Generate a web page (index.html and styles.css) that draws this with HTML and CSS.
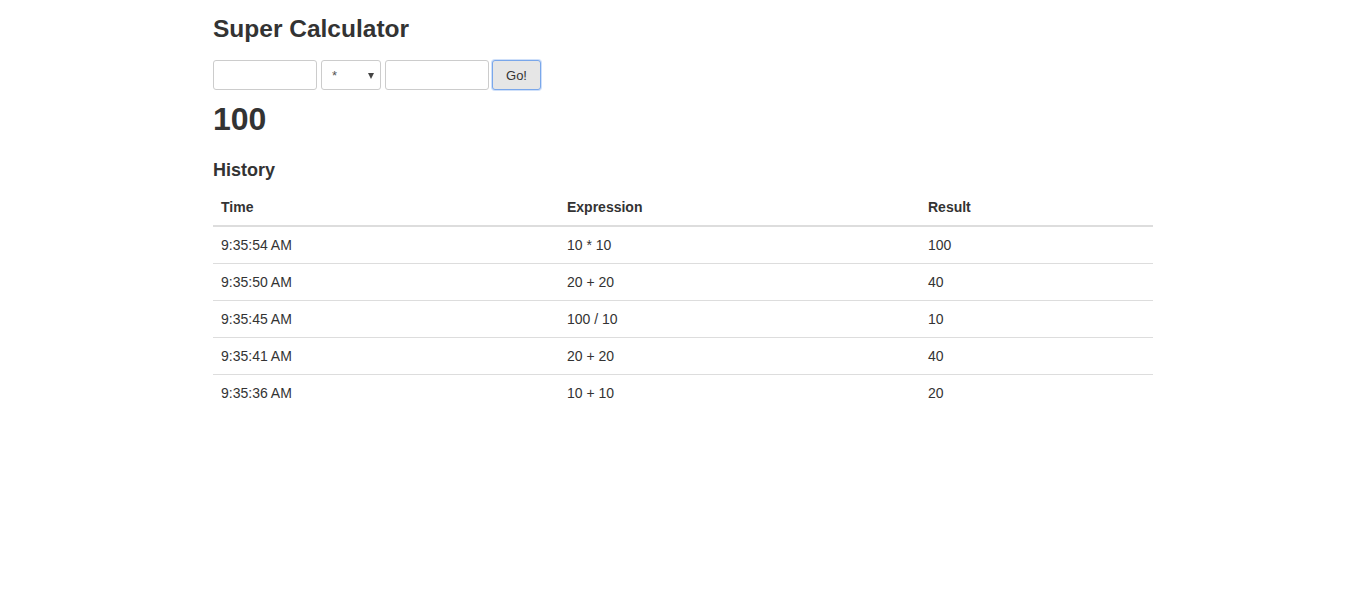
FILE: index.html
```html
<!DOCTYPE html>
<html>
<head>
<meta charset="utf-8">
<title>Super Calculator</title>
<link rel="stylesheet" href="styles.css">
</head>
<body>
<div class="container">
  <h3 class="title">Super Calculator</h3>
  <form class="calc">
    <input class="field" type="text">
    <span class="select-wrap">
      <select class="op">
        <option>*</option>
        <option>+</option>
        <option>-</option>
        <option>/</option>
      </select>
    </span>
    <input class="field" type="text">
    <button class="go" type="button">Go!</button>
  </form>
  <h1 class="result">100</h1>
  <h4 class="history-title">History</h4>
  <table class="history">
    <thead>
      <tr><th class="c1">Time</th><th class="c2">Expression</th><th class="c3">Result</th></tr>
    </thead>
    <tbody>
      <tr><td>9:35:54 AM</td><td>10 * 10</td><td>100</td></tr>
      <tr><td>9:35:50 AM</td><td>20 + 20</td><td>40</td></tr>
      <tr><td>9:35:45 AM</td><td>100 / 10</td><td>10</td></tr>
      <tr><td>9:35:41 AM</td><td>20 + 20</td><td>40</td></tr>
      <tr><td>9:35:36 AM</td><td>10 + 10</td><td>20</td></tr>
    </tbody>
  </table>
</div>
</body>
</html>
```

FILE: styles.css
```css
html, body {
  margin: 0;
  padding: 0;
  background: #fff;
}
body {
  font-family: "Liberation Sans", Arial, Helvetica, sans-serif;
  font-size: 14px;
  line-height: 20px;
  color: #333;
}
.container {
  width: 940px;
  margin: 0 auto;
}
.title {
  font-size: 24.5px;
  font-weight: bold;
  line-height: 26.4px;
  margin: 16px 0 0;
}
.calc {
  display: flex;
  align-items: center;
  gap: 4px;
  margin-top: 18px;
  height: 30px;
}
.field {
  box-sizing: border-box;
  width: 104px;
  height: 30px;
  border: 1px solid #ccc;
  border-radius: 3px;
  padding: 0 8px;
  font: 13px "Liberation Sans", Arial, sans-serif;
  color: #333;
  background: #fff;
  outline: none;
}
.select-wrap {
  position: relative;
  display: block;
  width: 60px;
  height: 30px;
}
.select-wrap::after {
  content: "";
  position: absolute;
  left: 47px;
  top: 13px;
  border-left: 3.5px solid transparent;
  border-right: 3.5px solid transparent;
  border-top: 6px solid #444;
  pointer-events: none;
}
.op {
  -webkit-appearance: none;
  appearance: none;
  box-sizing: border-box;
  width: 60px;
  height: 30px;
  border: 1px solid #ccc;
  border-radius: 3px;
  padding: 0 0 0 10px;
  font: 13px "Liberation Sans", Arial, sans-serif;
  color: #555;
  background: #fff;
  outline: none;
}
.go {
  box-sizing: border-box;
  width: 49px;
  height: 30px;
  margin-left: -1px;
  border: 1px solid #7aa7ea;
  border-radius: 3px;
  background: #e6e6e6;
  box-shadow: 0 0 0 1px #cfe0fa;
  font: 13px "Liberation Sans", Arial, sans-serif;
  color: #333;
  padding: 0;
  outline: none;
}
.result {
  font-size: 32px;
  font-weight: bold;
  line-height: 39.6px;
  margin: 10px 0 0;
}
.history-title {
  font-size: 18px;
  font-weight: bold;
  line-height: 19.8px;
  margin: 21px 0 0;
}
.history {
  width: 100%;
  table-layout: fixed;
  border-collapse: collapse;
  border-spacing: 0;
  margin-top: 8.5px;
}
.history th,
.history td {
  padding: 8px;
  text-align: left;
  vertical-align: top;
  line-height: 20px;
}
.history th {
  font-weight: bold;
  border-bottom: 2px solid #ddd;
}
.history td {
  border-top: 1px solid #ddd;
}
.history tbody tr:first-child td {
  border-top: 0;
}
.history .c1 {
  width: 330px;
}
.history .c2 {
  width: 345px;
}
.history .c3 {
  width: 217px;
}
```
